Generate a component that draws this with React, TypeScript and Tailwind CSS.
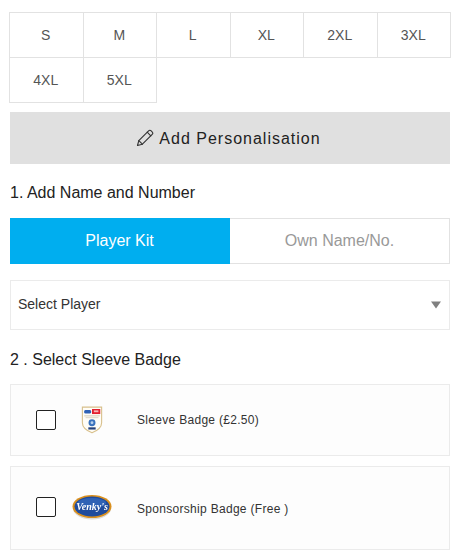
const sizes = ["S", "M", "L", "XL", "2XL", "3XL", "4XL", "5XL"];

function EflBadge() {
  return (
    <svg width="22" height="28" viewBox="0 0 24 30" className="block blur-[0.3px]">
      <path d="M1.5 1 H22.5 V18 C22.5 24 17 27 12 29 C7 27 1.5 24 1.5 18 Z" fill="#fffdf7" stroke="#d8c08c" strokeWidth="1.2" />
      <rect x="3.5" y="4" width="7.5" height="4" rx="1.5" fill="#2f62b5" />
      <rect x="12" y="3" width="9" height="5.5" fill="#e3202f" />
      <rect x="14" y="4.5" width="5" height="2" fill="#f6b7ba" />
      <rect x="3.5" y="10" width="17" height="1" fill="#cfc6b0" />
      <rect x="5" y="12" width="14" height="1" fill="#d8d2c2" />
      <circle cx="12" cy="18" r="3.8" fill="#3a72bd" />
      <circle cx="12" cy="18" r="1.6" fill="#b9d0ea" />
      <rect x="8" y="23" width="8" height="2.4" fill="#24407a" />
    </svg>
  );
}

function VenkysBadge() {
  return (
    <svg width="40" height="26" viewBox="0 0 40 26" className="block blur-[0.3px]">
      <ellipse cx="20" cy="14.5" rx="19" ry="11" fill="#c9c6bf" opacity="0.6" />
      <ellipse cx="20" cy="12.5" rx="19.5" ry="11.5" fill="#d98f1e" />
      <ellipse cx="20" cy="12.5" rx="17.5" ry="10" fill="#1f4b9c" />
      <ellipse cx="20" cy="9" rx="14" ry="5" fill="#2f62b5" />
      <text x="20" y="16" textAnchor="middle" fontSize="10" fontWeight="700" fontStyle="italic" fill="#ffffff" fontFamily="'Liberation Serif', serif">Venky's</text>
    </svg>
  );
}

function PencilIcon() {
  return (
    <svg width="18" height="18" viewBox="0 0 18 18" fill="none" stroke="#333" strokeWidth="1.1" strokeLinejoin="round" strokeLinecap="round">
      <path d="M1.5 16.5 L2.8 11.6 L12.6 1.8 C13.3 1.1 14.4 1.1 15.2 1.9 L16.1 2.8 C16.9 3.6 16.9 4.7 16.2 5.4 L6.4 15.2 Z" />
      <path d="M2.8 11.6 L6.4 15.2" />
      <path d="M11.2 3.2 L14.8 6.8" />
    </svg>
  );
}

function BadgeRow({ label, logo, className, boxClass, labelClass }: { label: string; logo: React.ReactNode; className: string; boxClass?: string; labelClass?: string }) {
  return (
    <div className={`flex w-[440px] items-center border border-[#ebebeb] bg-[#fdfdfd] ${className}`}>
      <div className={`ml-[25px] h-5 w-5 rounded-[2px] border border-[#222] bg-white ${boxClass ?? ""}`} />
      <div className={`ml-[13px] flex w-[46px] justify-center ${boxClass ?? ""}`}>{logo}</div>
      <span className={`ml-[22px] text-xs tracking-[0.3px] text-[#333] ${labelClass ?? ""}`}>{label}</span>
    </div>
  );
}

export default function App() {
  return (
    <div className="h-[558px] w-[464px] overflow-hidden bg-white pt-3 font-['Liberation_Sans',Arial,sans-serif]">
      <div className="ml-[9px] grid w-[442px] grid-cols-6 border-l border-t border-[#e2e2e2]">
        {sizes.map((s) => (
          <div key={s} className="flex h-[45px] items-center justify-center border-b border-r border-[#e2e2e2] bg-white pr-[1px] text-sm text-[#555]">
            {s}
          </div>
        ))}
      </div>

      <div className="ml-[10px] mt-[9px] flex h-[52px] w-[440px] items-center justify-center gap-[5px] bg-[#e0e0e0] pr-[3px] text-base tracking-[1px] text-[#222]">
        <PencilIcon />
        <span className="pt-[2px]">Add Personalisation</span>
      </div>

      <div className="ml-[10px] mt-[20px] h-[18px] text-base leading-[18px] text-[#222]">1. Add Name and Number</div>

      <div className="ml-[10px] mt-[16px] flex h-[46px] w-[440px] text-base">
        <div className="flex w-[220px] items-center justify-center bg-[#00aeef] pr-[1px] text-white">Player Kit</div>
        <div className="flex flex-1 items-center justify-center border border-l-0 border-[#e2e2e2] text-[#999]">Own Name/No.</div>
      </div>

      <div className="ml-[10px] mt-4 flex h-[50px] w-[440px] items-center justify-between border border-[#ebebeb] bg-white pl-[7px] pr-2 text-sm text-[#333]">
        <span className="pb-[2px]">Select Player</span>
        <svg width="10" height="8" viewBox="0 0 10 8"><path d="M0 0.5 H10 L5 7.5 Z" fill="#808080" /></svg>
      </div>

      <div className="ml-[10px] mt-[21px] h-[18px] text-base leading-[18px] text-[#222]">2 . Select Sleeve Badge</div>

      <BadgeRow className="ml-[10px] mt-[15px] h-[72px]" label="Sleeve Badge (£2.50)" logo={<EflBadge />} />
      <BadgeRow className="ml-[10px] mt-[10px] h-[84px]" boxClass="mb-[3px]" labelClass="pt-[2px]" label="Sponsorship Badge (Free )" logo={<VenkysBadge />} />
    </div>
  );
}
